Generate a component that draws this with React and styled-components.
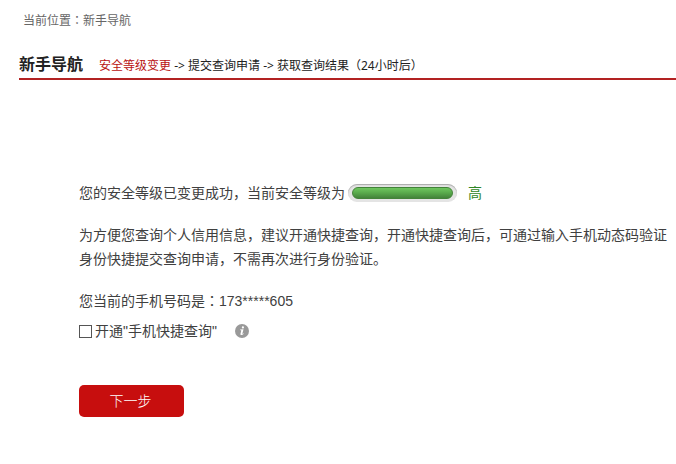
import React, { useState } from "react";
import styled, { createGlobalStyle } from "styled-components";

const steps = ["安全等级变更", "提交查询申请", "获取查询结果（24小时后）"];

const App = () => {
  const [quickQuery, setQuickQuery] = useState(false);

  return (
    <Page>
      <GlobalStyle />
      <Location>
        当前位置<Colon>：</Colon>新手导航
      </Location>
      <Header>
        <Title>新手导航</Title>
        <Steps>
          {steps.map((step, index) => (
            <React.Fragment key={step}>
              {index > 0 && " -> "}
              <Step $active={index === 0}>{step}</Step>
            </React.Fragment>
          ))}
        </Steps>
      </Header>
      <Content>
        <LevelRow>
          您的安全等级已变更成功，当前安全等级为
          <Meter role="img" aria-label="安全等级：高">
            <MeterBar />
          </Meter>
          <Level>高</Level>
        </LevelRow>
        <Text>
          为方便您查询个人信用信息，建议开通快捷查询，开通快捷查询后，可通过输入手机动态码验证身份快捷提交查询申请，不需再次进行身份验证。
        </Text>
        <Text>
          您当前的手机号码是<Colon>：</Colon>173*****605
        </Text>
        <Option>
          <Checkbox
            id="quick-query"
            type="checkbox"
            checked={quickQuery}
            onChange={() => setQuickQuery(!quickQuery)}
          />
          <label htmlFor="quick-query">开通"手机快捷查询"</label>
          <InfoIcon />
        </Option>
        <NextButton type="button">下一步</NextButton>
      </Content>
    </Page>
  );
};

const InfoIcon = () => (
  <Info viewBox="0 0 14 14" aria-hidden="true">
    <circle cx="7" cy="7" r="7" fill="#999" />
    <circle cx="7.9" cy="3.4" r="1.1" fill="#fff" />
    <path
      d="M5.2 5.6 8.5 5.2 7.4 9.6Q7.3 10.3 8.6 9.3L8.8 9.7Q7.3 11.3 6.1 11.1 5.2 10.9 5.5 9.7L6.3 6.4Q6.4 6 5.1 6Z"
      fill="#fff"
    />
  </Info>
);

export default App;

const GlobalStyle = createGlobalStyle`
  body {
    margin: 0;
    background: #fff;
    color: #404040;
    font-family: "Liberation Sans", "Noto Sans CJK SC", sans-serif;
    font-size: 14px;
    line-height: 24px;
  }
`;

const Page = styled.div`
  padding: 9px 0 24px 19px;
`;

// The TC face centres the colon in its box
const Colon = styled.span`
  font-family: "Noto Sans CJK TC", sans-serif;
  line-height: 1;
`;

const Location = styled.div`
  padding-left: 4px;
  color: #666;
  font-size: 12px;
`;

const Header = styled.header`
  display: flex;
  align-items: baseline;
  gap: 16px;
  margin-top: 20px;
  border-bottom: 2px solid #b22222;
`;

const Title = styled.h1`
  margin: 0;
  color: #222;
  font-size: 16px;
  font-weight: bold;
`;

const Steps = styled.div`
  color: #222;
  font-family: "Noto Sans", "Noto Sans CJK SC", sans-serif;
  font-size: 12px;
`;

const Step = styled.span`
  color: ${props => (props.$active ? "#b91212" : "inherit")};
`;

const Content = styled.main`
  padding: 101px 8px 0 60px;
`;

const LevelRow = styled.div`
  display: flex;
  align-items: center;
`;

const Meter = styled.span`
  box-sizing: border-box;
  width: 109px;
  height: 18px;
  margin: 0 11px 0 3px;
  padding: 3px 4px;
  border-radius: 9px;
  background: #e4e4e4;
  box-shadow: inset 0 1px 1px #aaa;
`;

const MeterBar = styled.span`
  box-sizing: border-box;
  display: block;
  height: 12px;
  border: 1px solid #438339;
  border-radius: 6px;
  background: linear-gradient(#6fc65f, #58a94b 50%, #43833a);
`;

const Level = styled.span`
  color: #2f8526;
`;

const Text = styled.p`
  margin: 18px 0 0;
`;

const Option = styled.div`
  display: flex;
  align-items: center;
  margin-top: 6px;
`;

const Checkbox = styled.input`
  appearance: none;
  box-sizing: border-box;
  width: 13px;
  height: 13px;
  margin: 0 3px 0 0;
  border: 1px solid #555;
  background: #fff;

  &:checked {
    background: #555;
    box-shadow: inset 0 0 0 2px #fff;
  }
`;

const Info = styled.svg`
  width: 14px;
  height: 14px;
  margin-left: 18px;
`;

const NextButton = styled.button`
  display: block;
  width: 105px;
  height: 32px;
  margin-top: 42px;
  padding: 0 2px 0 0;
  border: 0;
  border-radius: 5px;
  background: #c70e0e;
  color: #fff;
  font: inherit;
  font-weight: 300;
  cursor: pointer;
`;
